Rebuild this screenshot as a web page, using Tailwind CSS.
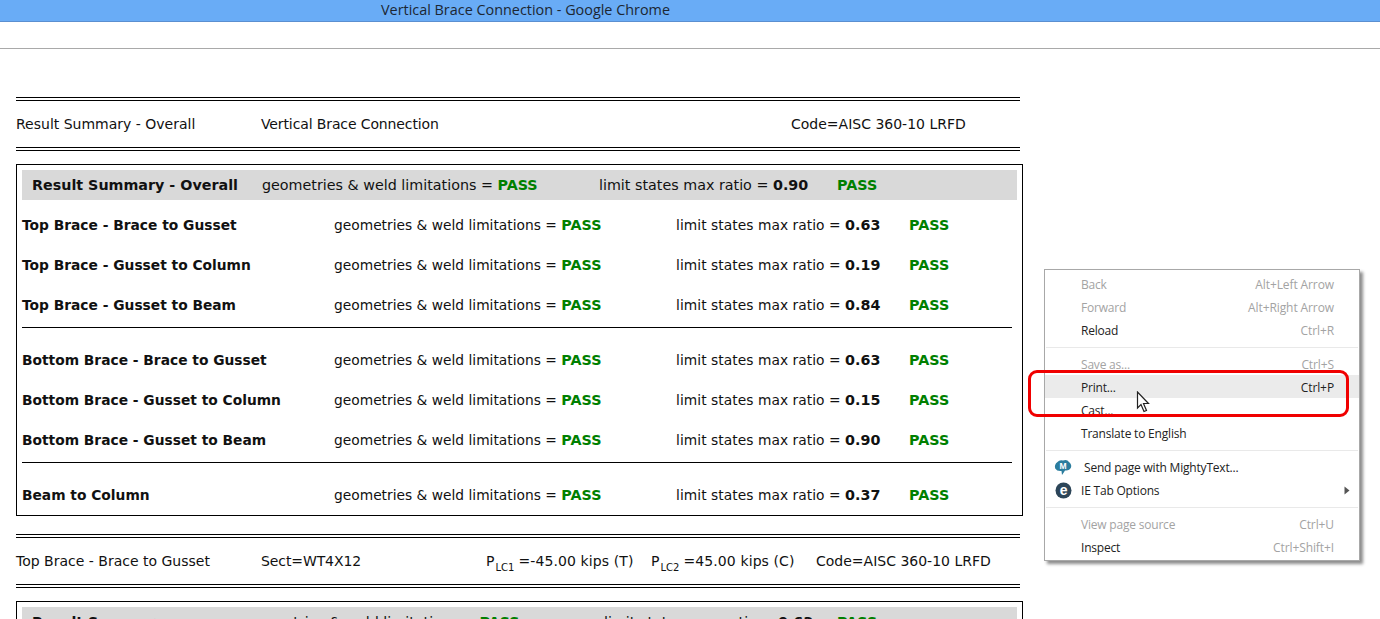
<!DOCTYPE html>
<html>
<head>
<meta charset="utf-8">
<script src="https://cdn.jsdelivr.net/npm/@tailwindcss/browser@4"></script>
</head>
<body class="bg-white overflow-hidden font-['DejaVu_Sans',sans-serif] text-[14px] text-[#111]">
<div class="relative w-[1380px] h-[619px] overflow-hidden">
  <div class="h-[22px] bg-[#69acf6] border-b border-[#5b8fd0] pl-[381px] font-['Open_Sans',sans-serif] text-[14.4px] leading-[20px] text-[#1c2733]">Vertical Brace Connection - Google Chrome</div>
  <div class="h-[27px] border-b border-[#a9a9a9]"></div>

  <div class="ml-4 w-[1004px] h-[4px] mt-[48px] border-y border-black"></div>
  <div class="ml-4 w-[1004px] h-[46px] flex items-center">
    <span class="w-[245px]">Result Summary - Overall</span>
    <span class="w-[530px] tracking-[-0.12px]">Vertical Brace Connection</span>
    <span>Code=AISC 360-10 LRFD</span>
  </div>
  <div class="ml-4 w-[1004px] h-[4px] border-y border-black"></div>

  <div class="ml-4 mt-[13px] w-[1007px] h-[352px] border border-black px-[5px] pt-[5px] text-[13.8px]">
    <div class="h-[30px] w-[995px] bg-[#d9d9d9] flex items-center pl-[10px] pt-[2px] text-[14.3px]">
      <b class="w-[230px]">Result Summary - Overall</b>
      <span class="w-[337px]">geometries &amp; weld limitations = <b class="text-[#008000]">PASS</b></span>
      <span class="w-[238px]">limit states max ratio = <b>0.90</b></span>
      <b class="text-[#008000]">PASS</b>
    </div>
    <div class="flex items-center h-[40px] mt-[5px]"><b class="w-[312px]">Top Brace - Brace to Gusset</b><span class="w-[342px] pt-[2px]">geometries &amp; weld limitations = <b class="text-[#008000] text-[14.3px]">PASS</b></span><span class="w-[233px] pt-[2px] tracking-[0.05px]">limit states max ratio = <b class="text-[14.3px]">0.63</b></span><b class="text-[#008000] text-[14.3px] pt-[2px]">PASS</b></div>
    <div class="flex items-center h-[40px]"><b class="w-[312px]">Top Brace - Gusset to Column</b><span class="w-[342px] pt-[2px]">geometries &amp; weld limitations = <b class="text-[#008000] text-[14.3px]">PASS</b></span><span class="w-[233px] pt-[2px] tracking-[0.05px]">limit states max ratio = <b class="text-[14.3px]">0.19</b></span><b class="text-[#008000] text-[14.3px] pt-[2px]">PASS</b></div>
    <div class="flex items-center h-[40px]"><b class="w-[312px]">Top Brace - Gusset to Beam</b><span class="w-[342px] pt-[2px]">geometries &amp; weld limitations = <b class="text-[#008000] text-[14.3px]">PASS</b></span><span class="w-[233px] pt-[2px] tracking-[0.05px]">limit states max ratio = <b class="text-[14.3px]">0.84</b></span><b class="text-[#008000] text-[14.3px] pt-[2px]">PASS</b></div>
    <div class="w-[990px] h-px bg-black mt-[2px] mb-[12px]"></div>
    <div class="flex items-center h-[40px]"><b class="w-[312px]">Bottom Brace - Brace to Gusset</b><span class="w-[342px] pt-[2px]">geometries &amp; weld limitations = <b class="text-[#008000] text-[14.3px]">PASS</b></span><span class="w-[233px] pt-[2px] tracking-[0.05px]">limit states max ratio = <b class="text-[14.3px]">0.63</b></span><b class="text-[#008000] text-[14.3px] pt-[2px]">PASS</b></div>
    <div class="flex items-center h-[40px]"><b class="w-[312px]">Bottom Brace - Gusset to Column</b><span class="w-[342px] pt-[2px]">geometries &amp; weld limitations = <b class="text-[#008000] text-[14.3px]">PASS</b></span><span class="w-[233px] pt-[2px] tracking-[0.05px]">limit states max ratio = <b class="text-[14.3px]">0.15</b></span><b class="text-[#008000] text-[14.3px] pt-[2px]">PASS</b></div>
    <div class="flex items-center h-[40px]"><b class="w-[312px]">Bottom Brace - Gusset to Beam</b><span class="w-[342px] pt-[2px]">geometries &amp; weld limitations = <b class="text-[#008000] text-[14.3px]">PASS</b></span><span class="w-[233px] pt-[2px] tracking-[0.05px]">limit states max ratio = <b class="text-[14.3px]">0.90</b></span><b class="text-[#008000] text-[14.3px] pt-[2px]">PASS</b></div>
    <div class="w-[990px] h-px bg-black mt-[2px] mb-[12px]"></div>
    <div class="flex items-center h-[40px]"><b class="w-[312px]">Beam to Column</b><span class="w-[342px] pt-[2px]">geometries &amp; weld limitations = <b class="text-[#008000] text-[14.3px]">PASS</b></span><span class="w-[233px] pt-[2px] tracking-[0.05px]">limit states max ratio = <b class="text-[14.3px]">0.37</b></span><b class="text-[#008000] text-[14.3px] pt-[2px]">PASS</b></div>
  </div>

  <div class="ml-4 mt-[18px] w-[1004px] h-[4px] border-y border-black"></div>
  <div class="ml-4 w-[1004px] h-[46px] flex items-center">
    <span class="w-[245px]">Top Brace - Brace to Gusset</span>
    <span class="w-[225px] tracking-[-0.1px]">Sect=WT4X12</span>
    <span class="w-[165px] tracking-[0.1px]">P<sub class="text-[10px] ml-[1px] mr-[4px] top-[5px] tracking-normal">LC1</sub>=-45.00 kips (T)</span>
    <span class="w-[165px] tracking-[0.1px]">P<sub class="text-[10px] ml-[1px] mr-[4px] top-[5px] tracking-normal">LC2</sub>=45.00 kips (C)</span>
    <span>Code=AISC 360-10 LRFD</span>
  </div>
  <div class="ml-4 w-[1004px] h-[4px] border-y border-black"></div>

  <div class="ml-4 mt-[13px] w-[1007px] h-[100px] border border-black px-[5px] pt-[5px] text-[14.3px]">
    <div class="h-[30px] w-[995px] bg-[#d9d9d9] flex items-center pl-[10px] pt-[2px]">
      <b class="w-[212px]">Result Summary</b>
      <span class="w-[360px]">geometries &amp; weld limitations = <b class="text-[#008000]">PASS</b></span>
      <span class="w-[233px]">limit states max ratio = <b>0.63</b></span>
      <b class="text-[#008000]">PASS</b>
    </div>
  </div>

  <!-- context menu -->
  <div class="absolute left-[1044px] top-[269px] w-[316px] h-[292px] bg-white border border-[#a8a8a8] shadow-[3px_3px_3px_rgba(0,0,0,0.45)] font-['Open_Sans',sans-serif] text-[12px] tracking-[-0.2px] text-[#222] pt-[3px]">
    <div class="flex justify-between items-center h-[23px] pl-[36px] pr-[25px] text-[#a3a3a3]"><span>Back</span><span class="tracking-[-0.1px]">Alt+Left Arrow</span></div>
    <div class="flex justify-between items-center h-[23px] pl-[36px] pr-[25px] text-[#a3a3a3]"><span>Forward</span><span class="tracking-[-0.1px]">Alt+Right Arrow</span></div>
    <div class="flex justify-between items-center h-[23px] pl-[36px] pr-[25px]"><span>Reload</span><span class="text-[#a3a3a3] tracking-[-0.1px]">Ctrl+R</span></div>
    <div class="h-px bg-[#e9e9e9] mx-px my-[5px]"></div>
    <div class="flex justify-between items-center h-[23px] pl-[36px] pr-[25px] text-[#a3a3a3]"><span>Save as...</span><span class="tracking-[-0.1px]">Ctrl+S</span></div>
    <div class="flex justify-between items-center h-[23px] -mt-px mb-px pt-[2px] pl-[36px] pr-[25px] bg-[#ebebeb]"><span>Print...</span><span class="tracking-[-0.1px]">Ctrl+P</span></div>
    <div class="flex justify-between items-center h-[23px] pl-[36px] pr-[25px]"><span>Cast...</span></div>
    <div class="flex justify-between items-center h-[23px] pl-[36px] pr-[25px]"><span>Translate to English</span></div>
    <div class="h-px bg-[#e9e9e9] mx-px my-[5px]"></div>
    <div class="relative flex items-center h-[23px] pl-[39px] pr-[25px]">
      <svg class="absolute left-[9px] top-[3px] w-[18px] h-[17px]" viewBox="0 0 18 17"><path d="M3.5 3 Q5.5 0.5 9 1.5 Q13 0 15 3 Q18 5.5 17 8.5 Q15.5 12 11 11.5 Q9.5 14 8 16 L7.5 12 Q3 12.5 1.2 9.5 Q0 5.5 3.5 3Z" fill="#2b7d9e"/><text x="9" y="9.8" text-anchor="middle" font-size="8.5" font-weight="700" fill="#fff" font-family="Liberation Sans">M</text></svg>
      <span>Send page with MightyText...</span>
    </div>
    <div class="relative flex items-center justify-between h-[23px] pl-[36px] pr-[9px]">
      <svg class="absolute left-[10px] top-[3px] w-[17px] h-[17px]" viewBox="0 0 17 17"><circle cx="8.5" cy="8.5" r="8" fill="#2c4558"/><text x="8.5" y="13" text-anchor="middle" font-size="14" font-weight="700" fill="#fff" font-family="Liberation Sans">e</text></svg>
      <span>IE Tab Options</span>
      <svg class="w-[6px] h-[9px]" viewBox="0 0 6 9"><path d="M0.5 0.5 L5.5 4.5 L0.5 8.5Z" fill="#555"/></svg>
    </div>
    <div class="h-px bg-[#e9e9e9] mx-px my-[5px]"></div>
    <div class="flex justify-between items-center h-[23px] pl-[36px] pr-[25px] text-[#a3a3a3]"><span>View page source</span><span class="tracking-[-0.1px]">Ctrl+U</span></div>
    <div class="flex justify-between items-center h-[23px] pl-[36px] pr-[25px]"><span>Inspect</span><span class="text-[#a3a3a3] tracking-[-0.1px]">Ctrl+Shift+I</span></div>
  </div>

  <!-- red annotation -->
  <div class="absolute left-[1028px] top-[370px] w-[321px] h-[47px] border-[3px] border-[#f00000] rounded-[9px]"></div>

  <!-- cursor -->
  <svg class="absolute left-[1136px] top-[391px] w-[14px] h-[22px]" viewBox="0 0 14 22"><path d="M1.5 1 L1.5 17 L5 13.5 L8 20.5 L10.5 19.5 L7.5 12.5 L12.5 12.5 Z" fill="#fff" stroke="#222" stroke-width="1.2"/></svg>
</div>
</body>
</html>
